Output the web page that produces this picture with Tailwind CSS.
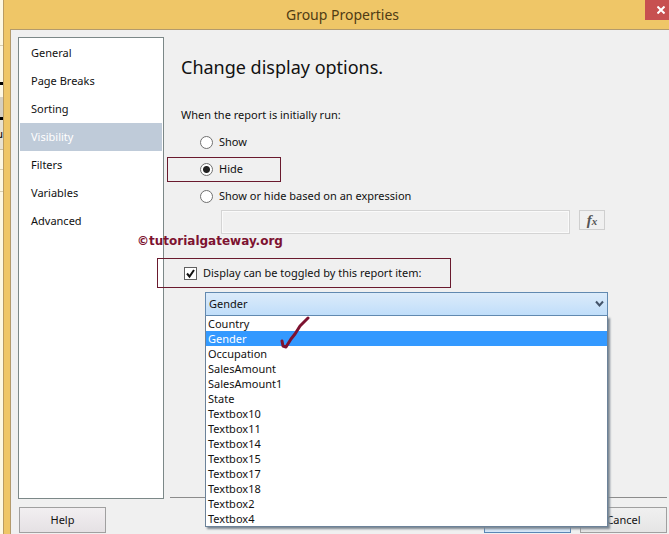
<!DOCTYPE html>
<html lang="en">
<head>
    <meta charset="UTF-8">
    <meta name="viewport" content="width=device-width, initial-scale=1.0">
    <title>Group Properties</title>
    <script src="https://cdn.jsdelivr.net/npm/@tailwindcss/browser@4"></script>
</head>
<body class="flex h-screen overflow-hidden bg-[#fdf8e4] font-['Noto_Sans','Open_Sans',sans-serif] text-[11px] text-[#111]">
    <!-- Window behind the dialog -->
    <div class="flex w-[3px] shrink-0 flex-col overflow-hidden">
        <div class="h-[46px] border-b border-[#d8ceb0]"></div>
        <div class="h-9"></div>
        <div class="h-[3px] bg-black"></div>
        <div class="h-3"></div>
        <div class="h-5 bg-[#d5cfc0]"></div>
        <div class="h-[3px] bg-black"></div>
        <div class="flex h-[30px] justify-end border-b border-[#c8bea0] bg-[#e8e2d2] leading-7 text-black">u</div>
        <div class="h-5 border-b border-[#d8ceb0]"></div>
        <div class="h-[22px] border-b border-[#d8ceb0]"></div>
    </div>

    <!-- Dialog -->
    <div class="flex min-w-0 flex-1 flex-col border-l border-[#b99c62] bg-[#efc667]">
        <header class="flex h-[29px] shrink-0">
            <h1 class="flex-1 pl-9 text-center text-sm leading-[30px] text-[#4f3c14]">Group Properties</h1>
            <button type="button" aria-label="Close" class="flex h-5 w-6 items-center justify-end bg-[#c75050] pr-1">
                <svg class="size-2" viewBox="0 0 8 8" stroke="#fff" stroke-width="2"><path d="M.5 .5L7.5 7.5M7.5 .5L.5 7.5"/></svg>
            </button>
        </header>

        <div class="ml-[6px] flex min-h-0 flex-1 flex-col border-l border-t border-[#b39a6c] bg-[#f0f0f0] pl-[7px] pt-[7px]">
            <div class="relative flex min-h-0 flex-1">
                <nav class="flex w-[146px] shrink-0 flex-col border border-[#7c8888] bg-white p-px">
                    <a href="#" class="pl-[11px] leading-7">General</a>
                    <a href="#" class="pl-[11px] leading-7">Page Breaks</a>
                    <a href="#" class="pl-[11px] leading-7">Sorting</a>
                    <a href="#" aria-current="page" class="bg-[#bfcbd9] pl-[11px] leading-7 text-white">Visibility</a>
                    <a href="#" class="pl-[11px] leading-7">Filters</a>
                    <a href="#" class="pl-[11px] leading-7">Variables</a>
                    <a href="#" class="pl-[11px] leading-7">Advanced</a>
                </nav>

                <main class="mb-px ml-[6px] mr-[2px] flex-1 border-b border-[#8c8c8c] pl-[11px]">
                    <h2 class="pt-3 text-lg leading-9">Change display options.</h2>

                    <fieldset class="pt-5">
                        <legend class="float-left w-full leading-5">When the report is initially run:</legend>
                        <div class="clear-both flex flex-col pl-[19px] pt-1">
                            <label class="flex h-[27px] items-center gap-[6px]">
                                <input type="radio" name="initial" class="size-[13px] appearance-none rounded-full border border-[#707070] bg-white">
                                Show
                            </label>
                            <label class="flex h-[27px] items-center gap-[6px]">
                                <input type="radio" name="initial" checked class="size-[13px] appearance-none rounded-full border border-[#707070] bg-white bg-[radial-gradient(circle,#222_3px,transparent_4px)]">
                                Hide
                            </label>
                            <label class="flex h-[27px] items-center gap-[6px]">
                                <input type="radio" name="initial" class="size-[13px] appearance-none rounded-full border border-[#707070] bg-white">
                                Show or hide based on an expression
                            </label>
                        </div>
                    </fieldset>

                    <div class="mr-[62px] flex items-start gap-[9px] pl-10">
                        <input type="text" disabled aria-label="Expression" class="h-6 min-w-0 flex-1 border border-[#d4d4d4] bg-[#f0f0f0] shadow-[inset_0_0_0_1px_#fafafa]">
                        <button type="button" aria-label="Edit expression" class="h-5 w-[26px] border border-[#cfcfcf] font-['Liberation_Serif',serif] text-[15px] font-bold italic leading-4 text-[#555]">f<span class="text-[11px]">x</span></button>
                    </div>

                    <div class="-ml-6 mt-6 flex h-[30px] w-[294px] items-center border border-[#6a1a2e] pl-[26px]">
                        <label class="flex items-center gap-[6px] whitespace-nowrap">
                            <span class="relative flex size-[13px]">
                                <input type="checkbox" checked class="size-[13px] appearance-none border border-[#606060] bg-white">
                                <svg class="pointer-events-none absolute inset-0 size-[13px]" viewBox="0 0 13 13" fill="none" stroke="#111" stroke-width="2"><path d="M3 6.5L5.5 9.5L10 3"/></svg>
                            </span>
                            Display can be toggled by this report item:
                        </label>
                    </div>

                    <div class="relative ml-6 mr-[59px] mt-1">
                        <select aria-label="Report item" class="block h-6 w-full appearance-none border border-[#6289b0] bg-linear-to-b from-[#dcebfa] to-[#c0defa] pl-[3px] text-[11px]">
                            <option>Gender</option>
                        </select>
                        <svg class="pointer-events-none absolute right-1 top-2 h-2 w-[9px]" viewBox="0 0 9 8" fill="none" stroke="#44546a" stroke-width="2"><path d="M1 1.5L4.5 5.5L8 1.5"/></svg>
                        <ul role="listbox" aria-label="Report items" class="absolute inset-x-0 top-6 z-10 border border-t-0 border-[#6c8299] bg-white leading-[15px] shadow-[2px_2px_2px_#7c8792]">
                            <li role="option" class="pl-[2px]">Country</li>
                            <li role="option" aria-selected="true" class="bg-[#3399ff] pl-[2px] text-white">Gender</li>
                            <li role="option" class="pl-[2px]">Occupation</li>
                            <li role="option" class="pl-[2px]">SalesAmount</li>
                            <li role="option" class="pl-[2px]">SalesAmount1</li>
                            <li role="option" class="pl-[2px]">State</li>
                            <li role="option" class="pl-[2px]">Textbox10</li>
                            <li role="option" class="pl-[2px]">Textbox11</li>
                            <li role="option" class="pl-[2px]">Textbox14</li>
                            <li role="option" class="pl-[2px]">Textbox15</li>
                            <li role="option" class="pl-[2px]">Textbox17</li>
                            <li role="option" class="pl-[2px]">Textbox18</li>
                            <li role="option" class="pl-[2px]">Textbox2</li>
                            <li role="option" class="pl-[2px]">Textbox4</li>
                        </ul>
                        <!-- Hand-drawn tick -->
                        <svg class="pointer-events-none absolute left-[75px] top-6 z-20 h-[34px] w-[30px]" viewBox="0 0 30 34" fill="none" stroke="#7d1230" stroke-width="3" stroke-linecap="round" stroke-linejoin="round"><path d="M28 2L20 10L15 18L11 23L6 31L3 30L2 25"/></svg>
                    </div>
                </main>

                <!-- Annotations -->
                <div class="pointer-events-none absolute left-[149px] top-[120px] h-[25px] w-[114px] border border-[#6a1a2e]"></div>
                <p class="absolute left-[119px] top-[194px] font-['DejaVu_Sans',sans-serif] text-xs font-bold leading-5 text-[#7d1230]">©tutorialgateway.org</p>
            </div>

            <footer class="flex shrink-0 gap-[9px] pb-px pl-px pr-[2px] pt-2">
                <button type="button" class="mr-auto h-[26px] w-[87px] border border-[#a0a0a0] bg-linear-to-b from-[#f2eff1] to-[#e5e1e4]">Help</button>
                <button type="button" class="h-[26px] w-[87px] border border-[#5a86b5] bg-[#d5e6f7]">OK</button>
                <button type="button" class="h-[26px] w-[87px] border border-[#a0a0a0] bg-linear-to-b from-[#f0f0f0] to-[#e5e5e5]">Cancel</button>
            </footer>
        </div>
    </div>
</body>
</html>
